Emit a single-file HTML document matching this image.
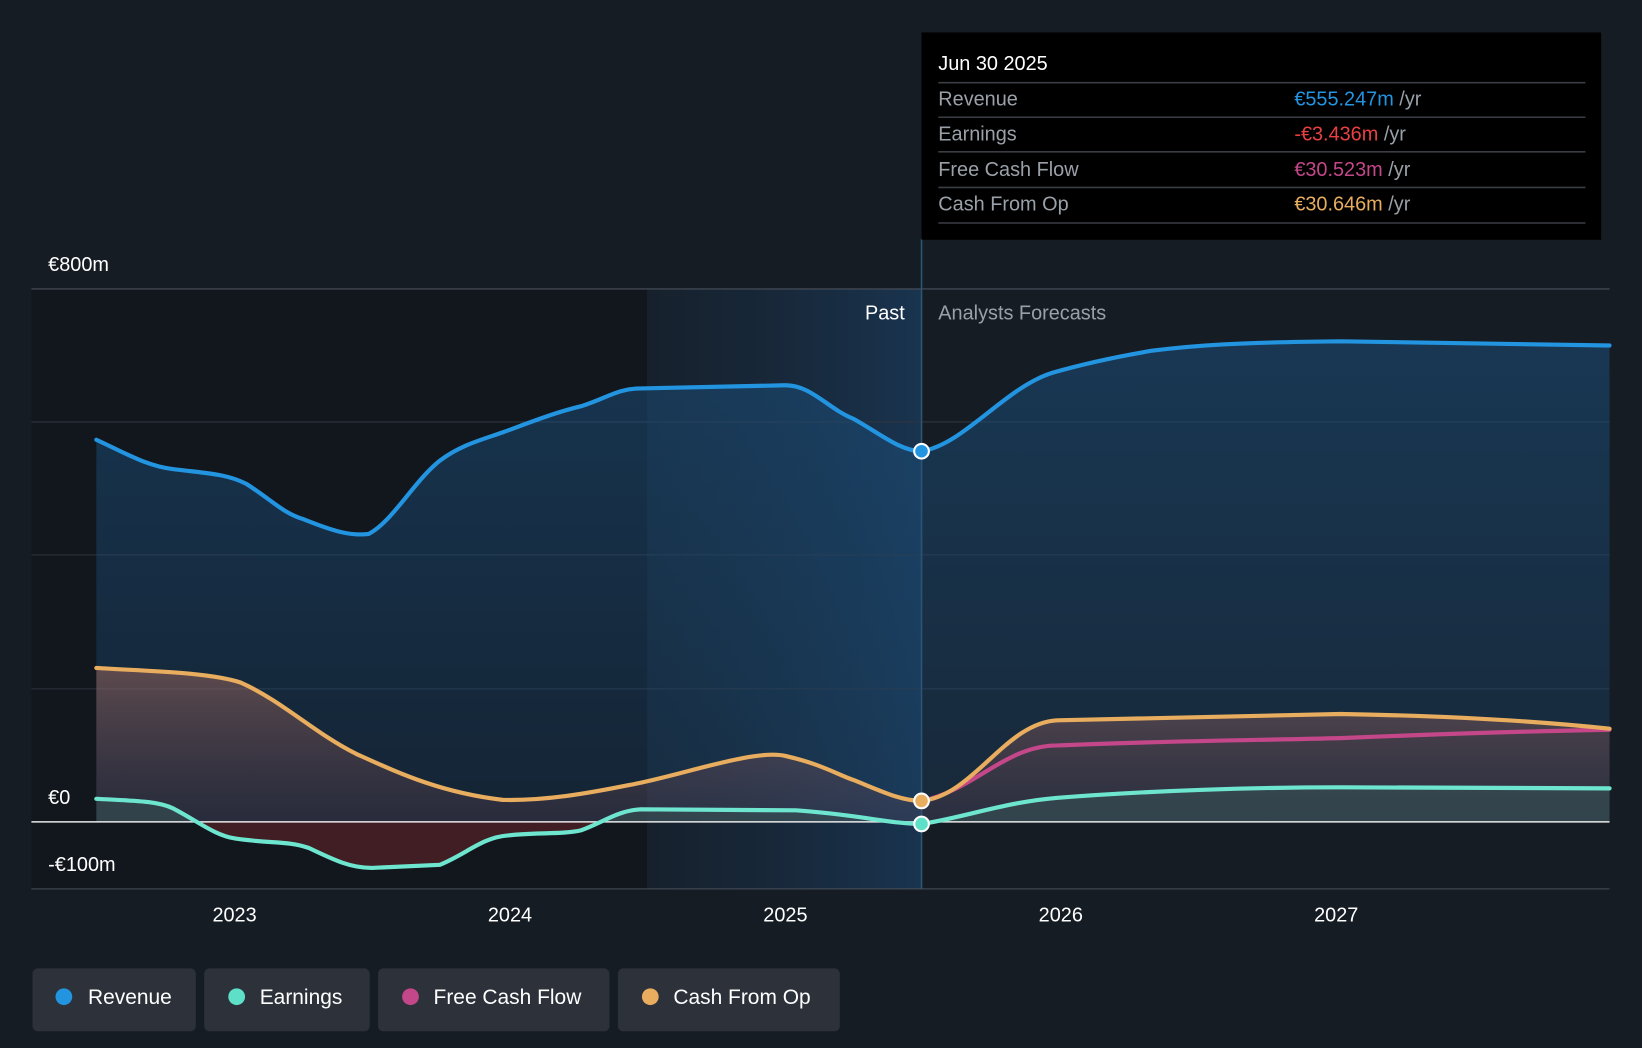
<!DOCTYPE html><html><head><style>html,body{margin:0;background:#161c24;overflow:hidden}svg{display:block}</style></head><body>
<svg width="1642" height="1048" viewBox="0 0 1568 1001" preserveAspectRatio="none" font-family="Liberation Sans, sans-serif">
<defs>
<linearGradient id="hl" x1="0" x2="1"><stop offset="0" stop-color="#17283a" stop-opacity=".4"/><stop offset="1" stop-color="#1a3a5a" stop-opacity=".8"/></linearGradient>
<linearGradient id="rf" x1="0" y1="0" x2="0" y2="1"><stop offset="0" stop-color="#1b4e7a" stop-opacity=".55"/><stop offset="1" stop-color="#1b4e7a" stop-opacity=".25"/></linearGradient>
<linearGradient id="cf" x1="0" y1="0" x2="0" y2="1"><stop offset="0" stop-color="#b07060" stop-opacity=".55"/><stop offset="1" stop-color="#604050" stop-opacity=".3"/></linearGradient>
<clipPath id="above"><rect x="0" y="0" width="1568" height="785"/></clipPath>
<clipPath id="below"><rect x="0" y="785" width="1568" height="200"/></clipPath>
</defs>
<rect width="1568" height="1001" fill="#161c24"/>
<rect x="30" y="276" width="588" height="573" fill="#12161d"/>
<rect x="618" y="276" width="262" height="573" fill="url(#hl)"/>
<g stroke="#2e3540" stroke-width="1"><line x1="30" y1="403" x2="1537" y2="403"/><line x1="30" y1="530" x2="1537" y2="530"/><line x1="30" y1="658" x2="1537" y2="658"/></g>
<line x1="30" y1="276" x2="1537" y2="276" stroke="#4a505a"/>
<line x1="30" y1="849" x2="1537" y2="849" stroke="#4a505a"/>
<path d="M92,420 C120,433 140,445 165,448 C195,452 215,452 235,462 C260,478 270,490 290,496 C320,508 335,512 352,510 C375,498 395,460 420,440 C440,425 460,420 480,413 C510,402 530,394 555,388 C580,380 590,371 612,371 L750,368 C775,368 790,390 815,400 C840,414 860,431 880,431 C920,425 960,370 1005,356 C1040,346 1070,340 1100,335 C1140,330 1180,327 1280,326 L1537,330 L1537,785 L92,785Z" fill="url(#rf)"/>
<path d="M92,638 C140,641 200,642 230,652 C270,670 300,700 340,720 C380,738 420,757 480,764 C520,765 560,758 600,750 C650,741 720,715 750,722 C785,730 800,740 815,745 C840,755 860,765 880,765 C930,760 960,690 1010,688 L1280,682 C1400,684 1480,690 1537,696 L1537,785 L92,785Z" fill="url(#cf)" opacity=".85"/>
<path id="ea" d="M92,763 C130,765 150,765 165,772 C190,785 205,798 225,801 C260,806 275,803 295,810 C320,822 335,829 355,829 L420,826 C445,816 460,800 485,798 C510,795 540,797 555,793 C575,786 590,774 612,773 L760,774 C820,778 850,787 880,787 C920,781 960,766 1010,762 C1100,755 1200,752 1280,752 L1537,753 L1537,785 L92,785Z" fill="#3a5858" opacity=".5" clip-path="url(#above)"/>
<path d="M92,763 C130,765 150,765 165,772 C190,785 205,798 225,801 C260,806 275,803 295,810 C320,822 335,829 355,829 L420,826 C445,816 460,800 485,798 C510,795 540,797 555,793 C575,786 590,774 612,773 L760,774 C820,778 850,787 880,787 C920,781 960,766 1010,762 C1100,755 1200,752 1280,752 L1537,753 L1537,785 L92,785Z" fill="#4a1f26" opacity=".85" clip-path="url(#below)"/>
<line x1="880" y1="228" x2="880" y2="849" stroke="#2a5576" stroke-width="1.5"/>
<line x1="30" y1="785" x2="1537" y2="785" stroke="#e8e8e8" stroke-width="1.5"/>
<g fill="none" stroke-width="4" stroke-linecap="round">
<path d="M92,763 C130,765 150,765 165,772 C190,785 205,798 225,801 C260,806 275,803 295,810 C320,822 335,829 355,829 L420,826 C445,816 460,800 485,798 C510,795 540,797 555,793 C575,786 590,774 612,773 L760,774 C820,778 850,787 880,787 C920,781 960,766 1010,762 C1100,755 1200,752 1280,752 L1537,753" stroke="#6ee6cf"/>
<path d="M880,765 C930,755 960,712 1010,712 C1100,708 1200,707 1280,705 C1400,700 1480,698 1537,697" stroke="#c4478a"/>
<path d="M92,638 C140,641 200,642 230,652 C270,670 300,700 340,720 C380,738 420,757 480,764 C520,765 560,758 600,750 C650,741 720,715 750,722 C785,730 800,740 815,745 C840,755 860,765 880,765 C930,760 960,690 1010,688 L1280,682 C1400,684 1480,690 1537,696" stroke="#e8ad5e"/>
<path d="M92,420 C120,433 140,445 165,448 C195,452 215,452 235,462 C260,478 270,490 290,496 C320,508 335,512 352,510 C375,498 395,460 420,440 C440,425 460,420 480,413 C510,402 530,394 555,388 C580,380 590,371 612,371 L750,368 C775,368 790,390 815,400 C840,414 860,431 880,431 C920,425 960,370 1005,356 C1040,346 1070,340 1100,335 C1140,330 1180,327 1280,326 L1537,330" stroke="#2394e0"/>
</g>
<circle cx="880" cy="431" r="7" fill="#2394e0" stroke="#fff" stroke-width="2"/>
<circle cx="880" cy="765" r="7" fill="#e8ad5e" stroke="#fff" stroke-width="2"/>
<circle cx="880" cy="787" r="7" fill="#5ee0c8" stroke="#fff" stroke-width="2"/>
<g font-size="19" fill="#fff">
<text x="46" y="259">€800m</text><text x="46" y="768">€0</text><text x="46" y="832">-€100m</text>
<text x="864" y="305" text-anchor="end">Past</text>
<text x="896" y="305" fill="#9aa0a8">Analysts Forecasts</text>
<g text-anchor="middle"><text x="224" y="880">2023</text><text x="487" y="880">2024</text><text x="750" y="880">2025</text><text x="1013" y="880">2026</text><text x="1276" y="880">2027</text></g>
</g>
<rect x="880" y="31" width="649" height="198" fill="#000"/>
<g font-size="19">
<text x="896" y="67" fill="#fff">Jun 30 2025</text>
<g stroke="#3a3e44" stroke-width="1.5"><line x1="896" y1="79" x2="1514" y2="79"/><line x1="896" y1="112" x2="1514" y2="112"/><line x1="896" y1="145" x2="1514" y2="145"/><line x1="896" y1="179" x2="1514" y2="179"/><line x1="896" y1="213" x2="1514" y2="213"/></g>
<g fill="#9aa0a8"><text x="896" y="101">Revenue</text><text x="896" y="134">Earnings</text><text x="896" y="168">Free Cash Flow</text><text x="896" y="201">Cash From Op</text></g>
<text x="1236" y="101"><tspan fill="#2394e0">€555.247m</tspan><tspan fill="#9aa0a8"> /yr</tspan></text>
<text x="1236" y="134"><tspan fill="#e84040">-€3.436m</tspan><tspan fill="#9aa0a8"> /yr</tspan></text>
<text x="1236" y="168"><tspan fill="#c4478a">€30.523m</tspan><tspan fill="#9aa0a8"> /yr</tspan></text>
<text x="1236" y="201"><tspan fill="#e8ad5e">€30.646m</tspan><tspan fill="#9aa0a8"> /yr</tspan></text>
</g>
<g font-size="20" fill="#fff">
<rect x="31" y="925" width="156" height="60" rx="5" fill="#2c313a"/><circle cx="61" cy="952" r="8" fill="#2394e0"/><text x="84" y="959">Revenue</text>
<rect x="195" y="925" width="158" height="60" rx="5" fill="#2c313a"/><circle cx="226" cy="952" r="8" fill="#5ee0c8"/><text x="248" y="959">Earnings</text>
<rect x="361" y="925" width="221" height="60" rx="5" fill="#2c313a"/><circle cx="392" cy="952" r="8" fill="#c4478a"/><text x="414" y="959">Free Cash Flow</text>
<rect x="590" y="925" width="212" height="60" rx="5" fill="#2c313a"/><circle cx="621" cy="952" r="8" fill="#e8ad5e"/><text x="643" y="959">Cash From Op</text>
</g>
</svg></body></html>
